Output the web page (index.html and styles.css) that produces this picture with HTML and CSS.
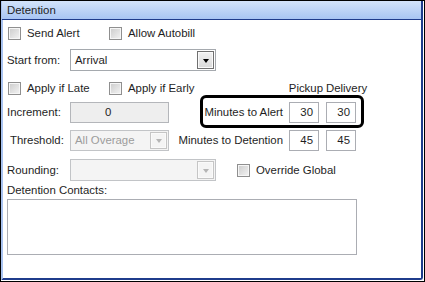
FILE: index.html
```html
<!DOCTYPE html>
<html lang="en">
<head>
    <meta charset="UTF-8">
    <title>Detention</title>
    <link rel="stylesheet" href="styles.css">
</head>
<body>
    <div class="frame">
        <div class="panel">
            <div class="panel-header">Detention</div>
            <div class="form">
                <div class="row row-1">
                    <label class="option"><span class="check"></span>Send Alert</label>
                    <label class="option"><span class="check"></span>Allow Autobill</label>
                </div>
                <div class="row row-2">
                    <span class="label">Start from:</span>
                    <div class="select wide">
                        <span class="select-text">Arrival</span>
                        <span class="drop"><span class="arrow"></span></span>
                    </div>
                </div>
                <div class="row row-3">
                    <label class="option"><span class="check"></span>Apply if Late</label>
                    <label class="option"><span class="check"></span>Apply if Early</label>
                    <span class="spacer"></span>
                    <span class="col-head">Pickup</span>
                    <span class="col-head delivery">Delivery</span>
                </div>
                <div class="row row-4">
                    <span class="label">Increment:</span>
                    <div class="input narrow disabled centered">0</div>
                    <span class="spacer"></span>
                    <span class="side-label">Minutes to Alert</span>
                    <div class="input num">30</div>
                    <div class="input num">30</div>
                    <div class="highlight"></div>
                </div>
                <div class="row row-5">
                    <span class="label indent">Threshold:</span>
                    <div class="select narrow disabled">
                        <span class="select-text">All Overage</span>
                        <span class="drop"><span class="arrow"></span></span>
                    </div>
                    <span class="spacer"></span>
                    <span class="side-label">Minutes to Detention</span>
                    <div class="input num">45</div>
                    <div class="input num">45</div>
                </div>
                <div class="row row-6">
                    <span class="label">Rounding:</span>
                    <div class="select wide disabled">
                        <span class="select-text"></span>
                        <span class="drop"><span class="arrow"></span></span>
                    </div>
                    <label class="option override"><span class="check"></span>Override Global</label>
                </div>
                <div class="contacts-label">Detention Contacts:</div>
                <div class="contacts"></div>
            </div>
        </div>
    </div>
</body>
</html>
```

FILE: styles.css
```css
body{
    margin:0;
    padding:0;
    font-family: "Liberation Sans", Arial, sans-serif;
    font-size: 11.4px;
    color:#1e1e1e;
    background:white;
}

.frame{
    box-sizing: border-box;
    width:425px;
    height:282px;
    border:1px solid #000;
    padding:0 1px 1px 0;
    background:white;
}

.panel{
    box-sizing: border-box;
    height:100%;
    border-left:2px solid #a9c3f0;
    border-right:2px solid #1f3c8c;
    border-bottom:2px solid #1f3c8c;
    border-bottom-right-radius:3px;
}

.panel-header{
    height:18px;
    line-height:18px;
    padding-left:5px;
    margin-left:-1px;
    background-image: linear-gradient(#d3e3fa, #a8c5f3);
    border-bottom:1px solid #1f3c8c;
}

.form{
    width:349px;
    padding-left:4px;
}

.row{
    display:flex;
    align-items:center;
    position:relative;
}

.row-1{ height:20px; margin-top:3px; }
.row-2{ height:24px; margin-top:5px; }
.row-3{ height:22px; margin-top:5px; }
.row-4{ height:22px; margin-top:2px; }
.row-5{ height:22px; margin-top:6px; }
.row-6{ height:22px; margin-top:8px; }

.spacer{ flex:1; }

.option{
    display:flex;
    align-items:center;
    width:100px;
    padding-left:1px;
}

.check{
    box-sizing: border-box;
    width:13px;
    height:13px;
    margin-right:6px;
    border:1px solid #8f8f8f;
    background-image: linear-gradient(135deg, #cbcbcb, #f4f4f4);
    box-shadow: inset 0 0 0 1px #f6f6f6;
}

.label{
    width:63px;
    flex:none;
}

.label.indent{
    box-sizing: border-box;
    padding-left:3px;
}

.select{
    box-sizing: border-box;
    display:flex;
    align-items:center;
    height:22px;
    border:1px solid #a5a9ae;
    background:white;
    padding:1px;
}

.select.wide{ width:146px; }
.select.narrow{ width:99px; height:21px; }

.select.disabled{
    border-color:#c2c4c7;
    background:#f4f4f4;
    color:#9c9c9c;
}

.select-text{
    flex:1;
    padding-left:3px;
}

.drop{
    box-sizing: border-box;
    width:17px;
    height:100%;
    display:flex;
    align-items:center;
    justify-content:center;
    border:1px solid #707070;
    background-image: linear-gradient(#f2f2f2, #d9d9d9);
    box-shadow: inset 0 0 0 1px #fafafa;
}

.arrow{
    width:0;
    height:0;
    border-left:3.5px solid transparent;
    border-right:3.5px solid transparent;
    border-top:4px solid #000;
    margin-top:1px;
}

.select.disabled .drop{
    border-color:#c5c5c5;
    background:#f4f4f4;
}

.select.disabled .arrow{
    border-top-color:#b5b5b5;
}

.input{
    box-sizing: border-box;
    height:21px;
    line-height:19px;
    border:1px solid #abadb3;
    background:white;
}

.input.narrow{ width:99px; }

.input.disabled{
    background:#eeeeee;
    border-color:#b4b6ba;
}

.input.centered{
    padding-left:34px;
}

.input.num{
    width:30px;
    text-align:right;
    padding-right:5px;
    margin-left:7px;
}

.side-label{
    margin-right:-1px;
}

.col-head{
    white-space:nowrap;
    align-self:flex-start;
    margin-top:5px;
}

.col-head.delivery{
    width:30px;
    margin-left:3px;
}

.override{
    width:auto;
    margin-left:20px;
}

.highlight{
    position:absolute;
    left:193px;
    top:-6px;
    width:164px;
    height:33px;
    box-sizing: border-box;
    border:3px solid #000;
    border-radius:6px;
    pointer-events:none;
}

.contacts-label{
    height:16px;
    line-height:16px;
    margin-top:1px;
}

.contacts{
    box-sizing: border-box;
    width:350px;
    height:56px;
    margin-top:1px;
    border:1px solid #abadb3;
}
```
